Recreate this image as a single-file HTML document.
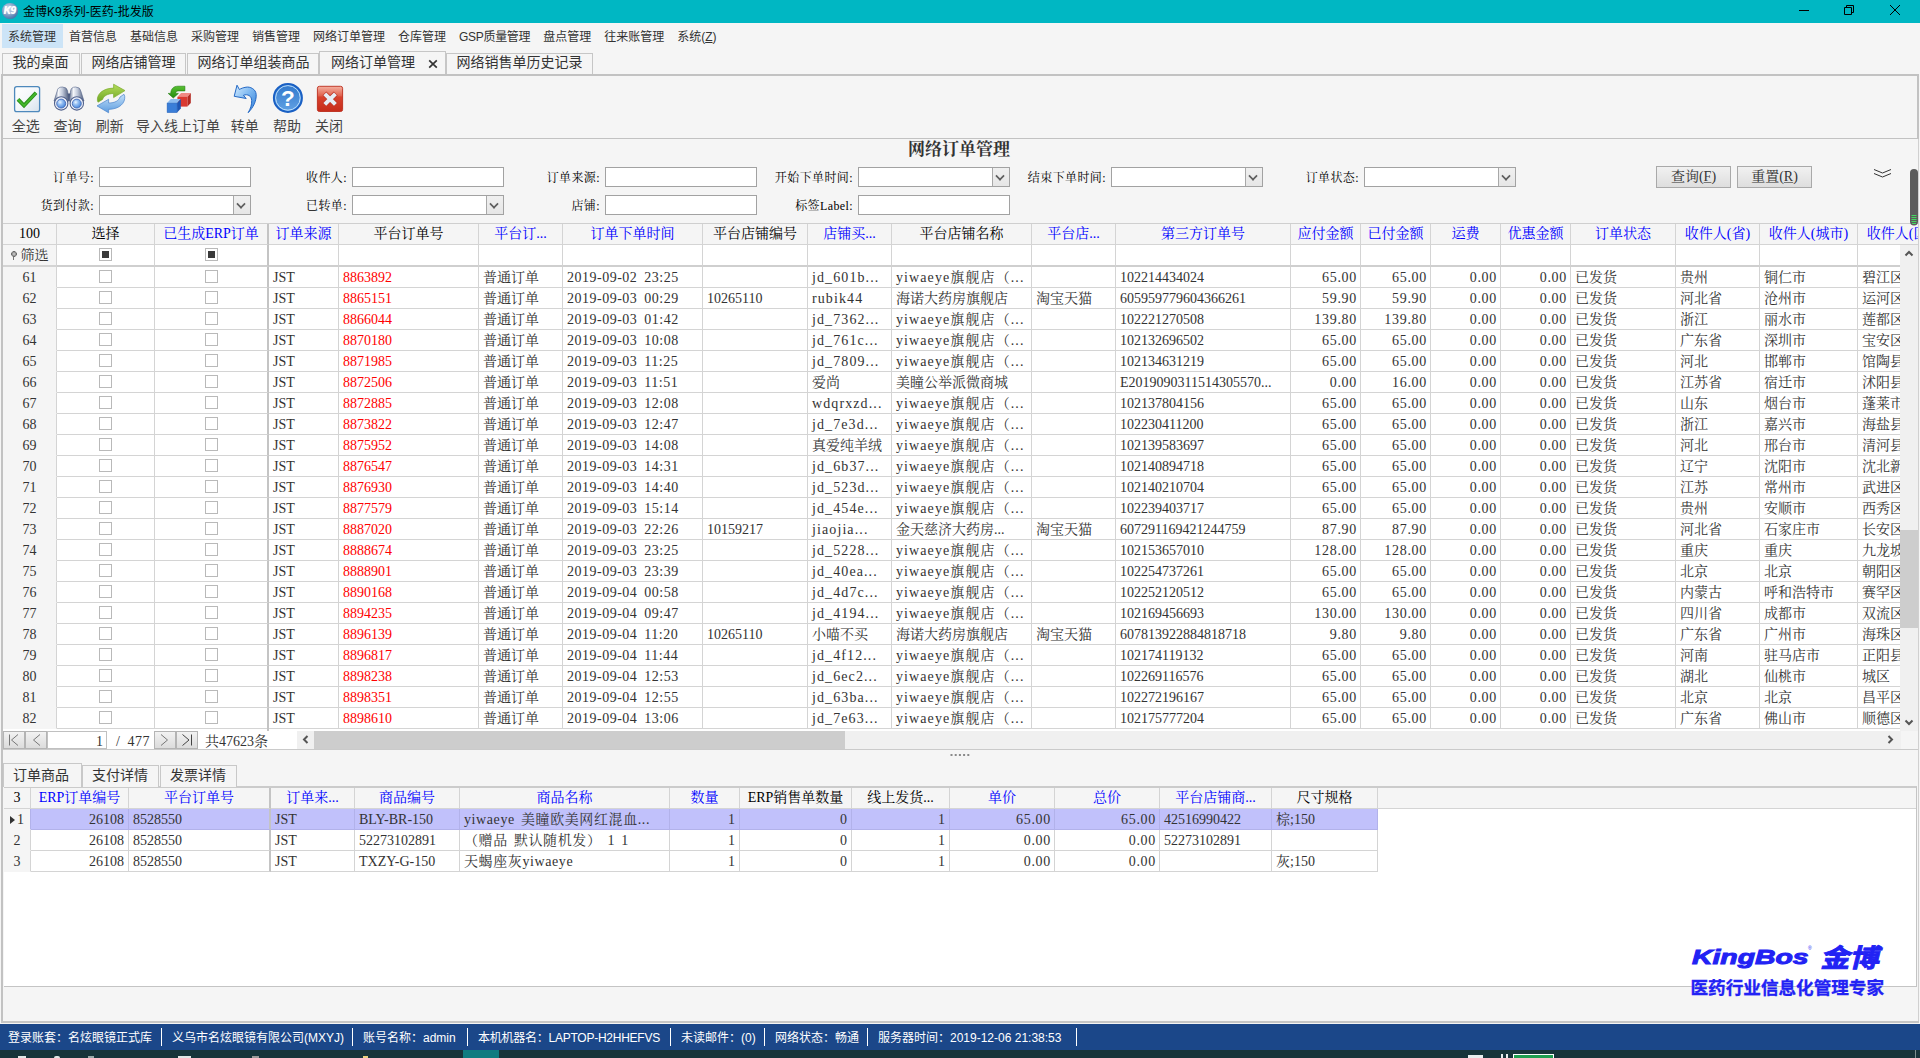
<!DOCTYPE html>
<html lang="zh-CN">
<head>
<meta charset="utf-8">
<title>金博K9系列-医药-批发版</title>
<style>
*{box-sizing:border-box;margin:0;padding:0}
html,body{width:1920px;height:1058px;overflow:hidden;background:#f5f5f5}
body{position:relative;font-family:"Liberation Sans","Noto Sans CJK SC",sans-serif;font-size:12px;color:#222}
.abs{position:absolute}
i{font-style:normal;display:inline-block}
/* title bar */
#tb{left:0;top:0;width:1920px;height:23px;background:#00b7c3}
#tb .t{left:23px;top:1px;line-height:23px;font-size:12px;color:#000}
#ico{left:2px;top:3px;width:15.5px;height:15.5px;border-radius:50%;background:radial-gradient(circle at 40% 35%,#d8e4f0 0,#9bb6d4 30%,#5a82b4 65%,#2f5590 100%);color:#fff;font:italic bold 10px/15px "Liberation Sans",sans-serif;text-align:center;letter-spacing:-.5px;text-shadow:0 0 1px #fff}
/* menu */
#menu{left:2px;top:24px;height:24px;white-space:nowrap;font-size:12px;color:#333}
#menu span{display:inline-block;height:24px;line-height:26px;padding:0 7px 0 6px}
#menu span.on{background:#cce4f7}
/* tabs */
.tab{top:53px;height:22px;border:1px solid #c6c6c6;border-bottom:none;background:#f5f5f5;font-size:14px;line-height:17px;color:#333;padding-left:9.500px;white-space:nowrap}
.tab.act{top:51px;height:23px;background:#f5f5f5;line-height:20px;z-index:3;padding-left:11px}
/* toolbar */
#tool{left:1px;top:74px;width:1918px;height:65px;border:2px solid #c2c2c2;border-bottom-width:1px;background:#f5f5f5}
.tbtn{position:absolute;top:8px;text-align:center;font-size:14px;color:#444;white-space:nowrap}
.tbtn em{display:block;height:30px}
.tbtn b{display:block;font-weight:normal;line-height:18px;margin-top:3px}
/* form */
.sim{font-family:"Liberation Serif","Noto Serif CJK SC",serif}
.lbl{position:absolute;font-size:12px;line-height:22px;letter-spacing:.4px;text-align:right;color:#000;white-space:nowrap}
.inp{position:absolute;width:152px;height:20px;border:1px solid #a2a2a2;background:#fff}
.inp.cmb:after{content:"";position:absolute;right:0;top:0;width:16px;height:18px;background:linear-gradient(#f0f0f0,#e6e6e6);border-left:1px solid #a8a8a8}
.inp.cmb:before{content:"";position:absolute;right:4.600px;top:4px;width:6px;height:6px;border-right:2px solid #5e5e5e;border-bottom:2px solid #5e5e5e;transform:rotate(45deg) scale(.82);z-index:2}
.btn{position:absolute;top:166px;width:75px;height:22px;border:1px solid #a9a9a9;background:linear-gradient(#f1f1f1,#dedede);font-size:14px;line-height:20px;text-align:center;color:#333}
.btn u{text-decoration-color:#777;text-underline-offset:1px}
/* grid */
#g1{position:absolute;left:3px;top:223px;width:1915px;height:508px;background:#fff;border-top:1px solid #cfcfcf;overflow:hidden}
#g2{position:absolute;left:4px;top:786px;width:1913px;height:201px;background:#fff;border-top:2px solid #cbcbcb;border-bottom:1px solid #c4c4c4;border-right:1px solid #c4c4c4;overflow:hidden}
#g2 .gh{width:1913px;background:#f5f5f5;border-bottom:1px solid #d4d4d4}
.gr{position:absolute;left:0;height:21px;white-space:nowrap;font-size:0}
.gr .c{display:inline-block;vertical-align:top;height:21px;line-height:21px;font-size:14px;border-right:1px solid #d4d4d4;border-bottom:1px solid #d4d4d4;padding:0 4px;overflow:hidden;color:#333;background:#fff}
#g1,#g2{font-family:"Liberation Serif","Noto Serif CJK SC",serif}
.gr .c.rn{background:#f5f5f5;text-align:center;padding:0;border-bottom-color:#f5f5f5}
.gr.gh .c.rn,.gr.gf .c.rn{border-bottom-color:#d4d4d4}
.gr .c.fz{border-right:2px solid #c4c4c4}
.gr.gf{height:22px}
.gr.gf .c{height:22px;border-bottom:2px solid #cfcfcf}
.gr .c.dt{letter-spacing:.5px;word-spacing:3px}
.gr .c.ls{letter-spacing:1.1px}
.gr .c.ls2{letter-spacing:.6px;word-spacing:2px}
.gr .c.dec{letter-spacing:.7px;padding-right:3px}
.gr.gh .c{background:#f5f5f5;text-align:center;color:#000;padding:0;line-height:19px;letter-spacing:0}
.gr.gh .c.bl{color:#0000ff}
.gr .c.r{text-align:right}
.gr .c.red{color:#ff0000}
.gr .c.cc{text-align:center}
.cb{width:13px;height:13px;border:1px solid #b9b9b9;background:#fff;vertical-align:top;margin-top:3px;position:relative}
.cb.ind:after{content:"";position:absolute;left:2px;top:2px;width:7px;height:7px;background:#3a3a3a}
.gf .c{text-align:center}
.pin{width:6px;height:10px;margin-right:4px;vertical-align:top;margin-top:6px;background:radial-gradient(circle at 50% 3px,#d8d8d8 0,#8a8a8a 2px,#6a6a6a 2.600px,transparent 3.100px),linear-gradient(#777,#777) 2.500px 5px/1px 4px no-repeat}
.sel .c{background:#c1c1fb;border-right-color:#b2b2ea;border-bottom-color:#b2b2ea}
.sel .c.rn{background:#f5f5f5}
.cur{width:0;height:0;border-left:5px solid #333;border-top:4px solid transparent;border-bottom:4px solid transparent;margin-right:2px}

/* frame lines */
.vl{position:absolute;background:#bdbdbd}
/* scrollbars */
#vs{left:1900px;top:245px;width:18px;height:486px;background:#f0f0f0}
#vs .th{position:absolute;left:0;top:285px;width:18px;height:98px;background:#cdcdcd}
#hs{left:297px;top:731px;width:1604px;height:18px;background:#f0f0f0}
#hs .th{position:absolute;left:17px;top:0;width:531px;height:18px;background:#cdcdcd}
/* pager */
#pg{left:3px;top:729px;width:294px;height:20px;background:#fff;font-size:14px;color:#333}
.pb{position:absolute;top:2px;height:18px;width:22px;border:1px solid #b4b4b4;background:linear-gradient(#f2f2f2,#dcdcdc)}
/* bottom tabs */
.bt{position:absolute;top:765px;height:22px;border:1px solid #c8c8c8;border-bottom:none;font-size:14px;line-height:19px;color:#333;padding-left:9px;background:#f5f5f5;white-space:nowrap}
.bt.act{top:763px;height:24px;line-height:22px;z-index:2}
.lg{z-index:4;color:#2222f4;white-space:nowrap;font-weight:bold;font-family:"Liberation Sans","Noto Sans CJK SC",sans-serif}
/* status */
#sb{left:0;top:1024px;width:1920px;height:26px;background:#1b4789;color:#fff;font-size:12px;line-height:28px;white-space:nowrap}
#sb span{position:absolute;top:0}
#sb i{position:absolute;top:4px;width:1px;height:18px;background:#fff}
</style>
</head>
<body>
<!-- title bar -->
<div id="tb" class="abs">
 <div id="ico" class="abs">K9</div>
 <div class="t abs">金博K9系列-医药-批发版</div>
 <svg class="abs" style="left:1790px;top:0" width="130" height="23" viewBox="0 0 130 23" fill="none" stroke="#000" stroke-width="1">
  <path d="M9 10.5h10"/><path d="M54.5 7.5h7v7h-7z M56.5 7.5v-2h7v7h-2"/><path d="M100 5l10 10M110 5l-10 10"/>
 </svg>
</div>
<!-- menu -->
<div id="menu" class="abs"><span class="on">系统管理</span><span>首营信息</span><span>基础信息</span><span>采购管理</span><span>销售管理</span><span>网络订单管理</span><span>仓库管理</span><span style="letter-spacing:-.33px">GSP质量管理</span><span>盘点管理</span><span>往来账管理</span><span>系统(<u>Z</u>)</span></div>
<!-- tabs -->
<div class="tab abs" style="left:2px;width:78px">我的桌面</div>
<div class="tab abs" style="left:81px;width:105px">网络店铺管理</div>
<div class="tab abs" style="left:187px;width:132px">网络订单组装商品</div>
<div class="tab act abs" style="left:319px;width:127px">网络订单管理<svg style="position:absolute;left:108px;top:7px" width="10" height="10" viewBox="0 0 10 10"><path d="M1.2 1.4L8.8 8.6M8.8 1.4L1.2 8.6" stroke="#333" stroke-width="1.7"/></svg></div>
<div class="tab abs" style="left:446px;width:147px">网络销售单历史记录</div>
<!-- toolbar -->
<div id="tool" class="abs">
 <div class="tbtn" style="left:7.8px;width:30px"><em></em><b>全选</b></div>
 <div class="tbtn" style="left:49.6px;width:30px"><em></em><b>查询</b></div>
 <div class="tbtn" style="left:91.7px;width:30px"><em></em><b>刷新</b></div>
 <div class="tbtn" style="left:132px;width:86px"><em></em><b>导入线上订单</b></div>
 <div class="tbtn" style="left:226.7px;width:30px"><em></em><b>转单</b></div>
 <div class="tbtn" style="left:269px;width:30px"><em></em><b>帮助</b></div>
 <div class="tbtn" style="left:311px;width:30px"><em></em><b>关闭</b></div>
</div>

<svg class="abs" style="left:0;top:80px;z-index:5" width="360" height="36" viewBox="0 80 360 36">
<defs>
<linearGradient id="gcb" x1="0" y1="0" x2="1" y2="1"><stop offset="0" stop-color="#ffffff"/><stop offset=".5" stop-color="#f4f7fa"/><stop offset="1" stop-color="#d6e2ec"/></linearGradient>
<linearGradient id="gbar" x1="0" y1="0" x2="1" y2="0"><stop offset="0" stop-color="#5d6c8c"/><stop offset=".3" stop-color="#f4f6fa"/><stop offset=".55" stop-color="#c4ccdc"/><stop offset="1" stop-color="#4a5878"/></linearGradient>
<radialGradient id="glens" cx=".38" cy=".35" r=".7"><stop offset="0" stop-color="#eaf4ff"/><stop offset=".35" stop-color="#9cc4f4"/><stop offset="1" stop-color="#3f7fd8"/></radialGradient>
<linearGradient id="ggr" x1="0" y1="0" x2="0" y2="1"><stop offset="0" stop-color="#b4dc5a"/><stop offset="1" stop-color="#6ea624"/></linearGradient>
<linearGradient id="gbl" x1="0" y1="0" x2="0" y2="1"><stop offset="0" stop-color="#c4e0f8"/><stop offset="1" stop-color="#5c9ce0"/></linearGradient>
<linearGradient id="gga" x1="0" y1="0" x2="0" y2="1"><stop offset="0" stop-color="#58c030"/><stop offset="1" stop-color="#238a10"/></linearGradient>
<linearGradient id="gun" x1="0" y1="0" x2="1" y2="1"><stop offset="0" stop-color="#d4ecff"/><stop offset=".5" stop-color="#7ab6f0"/><stop offset="1" stop-color="#2f7cd8"/></linearGradient>
<linearGradient id="ghp" x1="0" y1="0" x2="0" y2="1"><stop offset="0" stop-color="#3078cc"/><stop offset="1" stop-color="#62a2e4"/></linearGradient>
<linearGradient id="gcl" x1="0" y1="0" x2="0" y2="1"><stop offset="0" stop-color="#f4b0a0"/><stop offset=".38" stop-color="#e0604c"/><stop offset=".42" stop-color="#d8422e"/><stop offset="1" stop-color="#c62c1a"/></linearGradient>
</defs>
<!-- select all -->
<rect x="14.6" y="86.6" width="25" height="25" rx="2.2" fill="url(#gcb)" stroke="#4e89bc" stroke-width="1.3"/>
<path d="M18 99.4L24 105.6L36 92.8" fill="none" stroke="#2b8f1c" stroke-width="3.8" stroke-linejoin="miter"/>
<path d="M18 99.4L24 105.6L36 92.8" fill="none" stroke="#44b82c" stroke-width="1.8" stroke-linejoin="miter"/>
<!-- binoculars -->
<rect x="66" y="93.5" width="6" height="7" fill="#47567c"/>
<path d="M57.2 91Q57.6 87 62.4 87Q67 87 67.6 91L69 101L54 101Z" fill="url(#gbar)" stroke="#56648a" stroke-width=".6"/>
<path d="M70.6 91Q71 87 75.6 87Q80.2 87 80.8 91L84 101L69 101Z" fill="url(#gbar)" stroke="#56648a" stroke-width=".6"/>
<circle cx="61.2" cy="103.4" r="6.7" fill="#eef2fa" stroke="#51618c" stroke-width="1.1"/>
<circle cx="76.8" cy="103.4" r="6.7" fill="#eef2fa" stroke="#51618c" stroke-width="1.1"/>
<circle cx="61.2" cy="103.6" r="4.5" fill="url(#glens)" stroke="#3d62b0" stroke-width=".8"/>
<circle cx="76.8" cy="103.6" r="4.5" fill="url(#glens)" stroke="#3d62b0" stroke-width=".8"/>
<!-- refresh -->
<path d="M97.4 100.4C96.8 94 103 88.3 113.6 88.1L113.6 84.2L125 90.6L113.6 97.6L113.6 93.5C107.5 93.6 103.6 96 102.6 99.4L98 102.2Z" fill="url(#ggr)" stroke="#7aaa2c" stroke-width=".7"/>
<path d="M124.7 96.2C125.5 103 119.5 109.2 108.6 109.4L108.6 112.8L97 105.9L108.6 99.3L108.6 103C115 103 119 100.6 120 97L124 94.3Z" fill="url(#gbl)" stroke="#4a84cc" stroke-width=".7"/>
<!-- import -->
<path d="M177.4 96.9L181.1 93.1L190.8 93.1L187.4 96.9Z" fill="#f08a84"/>
<path d="M187.4 96.9L190.8 93.1L190.8 103.1L187.4 106.6Z" fill="#b42a22"/>
<rect x="177.4" y="96.9" width="10" height="9.7" fill="#d93a32"/>
<path d="M167.1 103.1L170.8 99.1L180.8 99.1L177.1 103.1Z" fill="#8cbcf0"/>
<path d="M177.1 103.1L180.8 99.1L180.8 108.4L177.1 112.6Z" fill="#1d56b4"/>
<rect x="167.1" y="103.1" width="10" height="9.5" fill="#3a7ed8" stroke="#2460b8" stroke-width=".5"/>
<path d="M184.9 86.2L178 86.2C173 86.2 170.8 89.5 170.8 93.4L168.2 93.4L173.3 98L178.4 93.4L175.8 93.4C175.8 91.6 176.5 90.9 178.5 90.9L184.9 90.9Z" fill="url(#gga)" stroke="#1e7a0c" stroke-width=".6"/>
<!-- undo -->
<path d="M237 85.2L234.2 96.3L246.2 98.5L243.4 95.3C248 93.6 251.5 96 251.7 100.6C251.8 105 250.5 108.6 248.2 112.7C253.6 107 256.4 101 256.2 94.5C255.8 89 250 86.4 246 87.2C243 87.7 241 88.5 239.4 89.5Z" fill="url(#gun)" stroke="#2468c4" stroke-width="1"/>
<!-- help -->
<circle cx="287.9" cy="97.9" r="14" fill="url(#ghp)" stroke="#1a60c4" stroke-width="2"/>
<circle cx="287.9" cy="97.9" r="12.3" fill="none" stroke="#bcdffc" stroke-width="1"/>
<text x="287.9" y="105.8" text-anchor="middle" font-family="Liberation Sans, sans-serif" font-weight="bold" font-size="22.5" fill="#fff">?</text>
<!-- close -->
<rect x="317.4" y="86.3" width="25.2" height="25.2" rx="2" fill="url(#gcl)" stroke="#bb2c1c" stroke-width=".9"/>
<path d="M324.4 93.4L335.8 104.8M335.800 93.4L324.400 104.8" stroke="#c0392a" stroke-width="5.6" stroke-linecap="butt"/>
<path d="M324.8 93.8L335.4 104.4M335.400 93.8L324.800 104.4" stroke="#e6edf5" stroke-width="4" stroke-linecap="butt"/>
</svg>
<!-- form -->
<div class="abs sim" style="left:859px;top:140px;width:200px;height:20px;font-size:17px;font-weight:bold;line-height:20px;color:#333;text-align:center;letter-spacing:0">网络订单管理</div>
<div class="sim">
<div class="lbl" style="left:0;width:94px;top:167px">订单号:</div><div class="inp" style="left:99px;top:167px"></div>
<div class="lbl" style="left:250px;width:97px;top:167px">收件人:</div><div class="inp" style="left:352px;top:167px"></div>
<div class="lbl" style="left:500px;width:100px;top:167px">订单来源:</div><div class="inp" style="left:605px;top:167px"></div>
<div class="lbl" style="left:750px;width:103px;top:167px">开始下单时间:</div><div class="inp cmb" style="left:858px;top:167px"></div>
<div class="lbl" style="left:1000px;width:106px;top:167px">结束下单时间:</div><div class="inp cmb" style="left:1111px;top:167px"></div>
<div class="lbl" style="left:1250px;width:109px;top:167px">订单状态:</div><div class="inp cmb" style="left:1364px;top:167px"></div>
<div class="lbl" style="left:0;width:94px;top:195px">货到付款:</div><div class="inp cmb" style="left:99px;top:195px"></div>
<div class="lbl" style="left:250px;width:97px;top:195px">已转单:</div><div class="inp cmb" style="left:352px;top:195px"></div>
<div class="lbl" style="left:500px;width:100px;top:195px">店铺:</div><div class="inp" style="left:605px;top:195px"></div>
<div class="lbl" style="left:750px;width:103px;top:195px">标签Label:</div><div class="inp" style="left:858px;top:195px"></div>
<div class="btn" style="left:1656px">查询(<u>F</u>)</div>
<div class="btn" style="left:1737px">重置(<u>R</u>)</div>
</div>
<div id="g1">
<div class="gr gh" style="top:0">
<div class="c rn" style="width:54px">100</div>
<div class="c hc" style="width:98px">选择</div>
<div class="c hc bl fz" style="width:114px">已生成ERP订单</div>
<div class="c hc bl" style="width:70px">订单来源</div>
<div class="c hc" style="width:140px">平台订单号</div>
<div class="c hc bl" style="width:84px">平台订...</div>
<div class="c hc bl" style="width:140px">订单下单时间</div>
<div class="c hc" style="width:105px">平台店铺编号</div>
<div class="c hc bl" style="width:84px">店铺买...</div>
<div class="c hc" style="width:140px">平台店铺名称</div>
<div class="c hc bl" style="width:84px">平台店...</div>
<div class="c hc bl" style="width:175px">第三方订单号</div>
<div class="c hc bl" style="width:70px">应付金额</div>
<div class="c hc bl" style="width:70px">已付金额</div>
<div class="c hc bl" style="width:70px">运费</div>
<div class="c hc bl" style="width:70px">优惠金额</div>
<div class="c hc bl" style="width:105px">订单状态</div>
<div class="c hc bl" style="width:84px">收件人(省)</div>
<div class="c hc bl" style="width:98px">收件人(城市)</div>
<div class="c hc bl" style="width:98px">收件人(区县)</div>
</div>
<div class="gr gf" style="top:21px">
<div class="c rn fl" style="width:54px"><i class="pin"></i>筛选</div>
<div class="c" style="width:98px"><i class="cb ind"></i></div>
<div class="c fz" style="width:114px"><i class="cb ind"></i></div>
<div class="c" style="width:70px"></div>
<div class="c" style="width:140px"></div>
<div class="c" style="width:84px"></div>
<div class="c" style="width:140px"></div>
<div class="c" style="width:105px"></div>
<div class="c" style="width:84px"></div>
<div class="c" style="width:140px"></div>
<div class="c" style="width:84px"></div>
<div class="c" style="width:175px"></div>
<div class="c" style="width:70px"></div>
<div class="c" style="width:70px"></div>
<div class="c" style="width:70px"></div>
<div class="c" style="width:70px"></div>
<div class="c" style="width:105px"></div>
<div class="c" style="width:84px"></div>
<div class="c" style="width:98px"></div>
<div class="c" style="width:98px"></div>
</div>
<div class="gr" style="top:43px">
<div class="c rn" style="width:54px">61</div>
<div class="c cc" style="width:98px"><i class="cb"></i></div>
<div class="c cc fz" style="width:114px"><i class="cb"></i></div>
<div class="c" style="width:70px">JST</div>
<div class="c red" style="width:140px">8863892</div>
<div class="c" style="width:84px">普通订单</div>
<div class="c dt" style="width:140px">2019-09-02 23:25</div>
<div class="c" style="width:105px"></div>
<div class="c ls" style="width:84px">jd_601b...</div>
<div class="c ls" style="width:140px">yiwaeye旗舰店（...</div>
<div class="c" style="width:84px"></div>
<div class="c" style="width:175px">102214434024</div>
<div class="c r dec" style="width:70px">65.00</div>
<div class="c r dec" style="width:70px">65.00</div>
<div class="c r dec" style="width:70px">0.00</div>
<div class="c r dec" style="width:70px">0.00</div>
<div class="c" style="width:105px">已发货</div>
<div class="c" style="width:84px">贵州</div>
<div class="c" style="width:98px">铜仁市</div>
<div class="c" style="width:98px">碧江区</div>
</div>
<div class="gr" style="top:64px">
<div class="c rn" style="width:54px">62</div>
<div class="c cc" style="width:98px"><i class="cb"></i></div>
<div class="c cc fz" style="width:114px"><i class="cb"></i></div>
<div class="c" style="width:70px">JST</div>
<div class="c red" style="width:140px">8865151</div>
<div class="c" style="width:84px">普通订单</div>
<div class="c dt" style="width:140px">2019-09-03 00:29</div>
<div class="c" style="width:105px">10265110</div>
<div class="c ls" style="width:84px">rubik44</div>
<div class="c" style="width:140px">海诺大药房旗舰店</div>
<div class="c" style="width:84px">淘宝天猫</div>
<div class="c" style="width:175px">605959779604366261</div>
<div class="c r dec" style="width:70px">59.90</div>
<div class="c r dec" style="width:70px">59.90</div>
<div class="c r dec" style="width:70px">0.00</div>
<div class="c r dec" style="width:70px">0.00</div>
<div class="c" style="width:105px">已发货</div>
<div class="c" style="width:84px">河北省</div>
<div class="c" style="width:98px">沧州市</div>
<div class="c" style="width:98px">运河区</div>
</div>
<div class="gr" style="top:85px">
<div class="c rn" style="width:54px">63</div>
<div class="c cc" style="width:98px"><i class="cb"></i></div>
<div class="c cc fz" style="width:114px"><i class="cb"></i></div>
<div class="c" style="width:70px">JST</div>
<div class="c red" style="width:140px">8866044</div>
<div class="c" style="width:84px">普通订单</div>
<div class="c dt" style="width:140px">2019-09-03 01:42</div>
<div class="c" style="width:105px"></div>
<div class="c ls" style="width:84px">jd_7362...</div>
<div class="c ls" style="width:140px">yiwaeye旗舰店（...</div>
<div class="c" style="width:84px"></div>
<div class="c" style="width:175px">102221270508</div>
<div class="c r dec" style="width:70px">139.80</div>
<div class="c r dec" style="width:70px">139.80</div>
<div class="c r dec" style="width:70px">0.00</div>
<div class="c r dec" style="width:70px">0.00</div>
<div class="c" style="width:105px">已发货</div>
<div class="c" style="width:84px">浙江</div>
<div class="c" style="width:98px">丽水市</div>
<div class="c" style="width:98px">莲都区</div>
</div>
<div class="gr" style="top:106px">
<div class="c rn" style="width:54px">64</div>
<div class="c cc" style="width:98px"><i class="cb"></i></div>
<div class="c cc fz" style="width:114px"><i class="cb"></i></div>
<div class="c" style="width:70px">JST</div>
<div class="c red" style="width:140px">8870180</div>
<div class="c" style="width:84px">普通订单</div>
<div class="c dt" style="width:140px">2019-09-03 10:08</div>
<div class="c" style="width:105px"></div>
<div class="c ls" style="width:84px">jd_761c...</div>
<div class="c ls" style="width:140px">yiwaeye旗舰店（...</div>
<div class="c" style="width:84px"></div>
<div class="c" style="width:175px">102132696502</div>
<div class="c r dec" style="width:70px">65.00</div>
<div class="c r dec" style="width:70px">65.00</div>
<div class="c r dec" style="width:70px">0.00</div>
<div class="c r dec" style="width:70px">0.00</div>
<div class="c" style="width:105px">已发货</div>
<div class="c" style="width:84px">广东省</div>
<div class="c" style="width:98px">深圳市</div>
<div class="c" style="width:98px">宝安区</div>
</div>
<div class="gr" style="top:127px">
<div class="c rn" style="width:54px">65</div>
<div class="c cc" style="width:98px"><i class="cb"></i></div>
<div class="c cc fz" style="width:114px"><i class="cb"></i></div>
<div class="c" style="width:70px">JST</div>
<div class="c red" style="width:140px">8871985</div>
<div class="c" style="width:84px">普通订单</div>
<div class="c dt" style="width:140px">2019-09-03 11:25</div>
<div class="c" style="width:105px"></div>
<div class="c ls" style="width:84px">jd_7809...</div>
<div class="c ls" style="width:140px">yiwaeye旗舰店（...</div>
<div class="c" style="width:84px"></div>
<div class="c" style="width:175px">102134631219</div>
<div class="c r dec" style="width:70px">65.00</div>
<div class="c r dec" style="width:70px">65.00</div>
<div class="c r dec" style="width:70px">0.00</div>
<div class="c r dec" style="width:70px">0.00</div>
<div class="c" style="width:105px">已发货</div>
<div class="c" style="width:84px">河北</div>
<div class="c" style="width:98px">邯郸市</div>
<div class="c" style="width:98px">馆陶县</div>
</div>
<div class="gr" style="top:148px">
<div class="c rn" style="width:54px">66</div>
<div class="c cc" style="width:98px"><i class="cb"></i></div>
<div class="c cc fz" style="width:114px"><i class="cb"></i></div>
<div class="c" style="width:70px">JST</div>
<div class="c red" style="width:140px">8872506</div>
<div class="c" style="width:84px">普通订单</div>
<div class="c dt" style="width:140px">2019-09-03 11:51</div>
<div class="c" style="width:105px"></div>
<div class="c" style="width:84px">爱尚</div>
<div class="c" style="width:140px">美瞳公举派微商城</div>
<div class="c" style="width:84px"></div>
<div class="c" style="width:175px">E2019090311514305570...</div>
<div class="c r dec" style="width:70px">0.00</div>
<div class="c r dec" style="width:70px">16.00</div>
<div class="c r dec" style="width:70px">0.00</div>
<div class="c r dec" style="width:70px">0.00</div>
<div class="c" style="width:105px">已发货</div>
<div class="c" style="width:84px">江苏省</div>
<div class="c" style="width:98px">宿迁市</div>
<div class="c" style="width:98px">沭阳县</div>
</div>
<div class="gr" style="top:169px">
<div class="c rn" style="width:54px">67</div>
<div class="c cc" style="width:98px"><i class="cb"></i></div>
<div class="c cc fz" style="width:114px"><i class="cb"></i></div>
<div class="c" style="width:70px">JST</div>
<div class="c red" style="width:140px">8872885</div>
<div class="c" style="width:84px">普通订单</div>
<div class="c dt" style="width:140px">2019-09-03 12:08</div>
<div class="c" style="width:105px"></div>
<div class="c ls" style="width:84px">wdqrxzd...</div>
<div class="c ls" style="width:140px">yiwaeye旗舰店（...</div>
<div class="c" style="width:84px"></div>
<div class="c" style="width:175px">102137804156</div>
<div class="c r dec" style="width:70px">65.00</div>
<div class="c r dec" style="width:70px">65.00</div>
<div class="c r dec" style="width:70px">0.00</div>
<div class="c r dec" style="width:70px">0.00</div>
<div class="c" style="width:105px">已发货</div>
<div class="c" style="width:84px">山东</div>
<div class="c" style="width:98px">烟台市</div>
<div class="c" style="width:98px">蓬莱市</div>
</div>
<div class="gr" style="top:190px">
<div class="c rn" style="width:54px">68</div>
<div class="c cc" style="width:98px"><i class="cb"></i></div>
<div class="c cc fz" style="width:114px"><i class="cb"></i></div>
<div class="c" style="width:70px">JST</div>
<div class="c red" style="width:140px">8873822</div>
<div class="c" style="width:84px">普通订单</div>
<div class="c dt" style="width:140px">2019-09-03 12:47</div>
<div class="c" style="width:105px"></div>
<div class="c ls" style="width:84px">jd_7e3d...</div>
<div class="c ls" style="width:140px">yiwaeye旗舰店（...</div>
<div class="c" style="width:84px"></div>
<div class="c" style="width:175px">102230411200</div>
<div class="c r dec" style="width:70px">65.00</div>
<div class="c r dec" style="width:70px">65.00</div>
<div class="c r dec" style="width:70px">0.00</div>
<div class="c r dec" style="width:70px">0.00</div>
<div class="c" style="width:105px">已发货</div>
<div class="c" style="width:84px">浙江</div>
<div class="c" style="width:98px">嘉兴市</div>
<div class="c" style="width:98px">海盐县</div>
</div>
<div class="gr" style="top:211px">
<div class="c rn" style="width:54px">69</div>
<div class="c cc" style="width:98px"><i class="cb"></i></div>
<div class="c cc fz" style="width:114px"><i class="cb"></i></div>
<div class="c" style="width:70px">JST</div>
<div class="c red" style="width:140px">8875952</div>
<div class="c" style="width:84px">普通订单</div>
<div class="c dt" style="width:140px">2019-09-03 14:08</div>
<div class="c" style="width:105px"></div>
<div class="c" style="width:84px">真爱纯羊绒</div>
<div class="c ls" style="width:140px">yiwaeye旗舰店（...</div>
<div class="c" style="width:84px"></div>
<div class="c" style="width:175px">102139583697</div>
<div class="c r dec" style="width:70px">65.00</div>
<div class="c r dec" style="width:70px">65.00</div>
<div class="c r dec" style="width:70px">0.00</div>
<div class="c r dec" style="width:70px">0.00</div>
<div class="c" style="width:105px">已发货</div>
<div class="c" style="width:84px">河北</div>
<div class="c" style="width:98px">邢台市</div>
<div class="c" style="width:98px">清河县</div>
</div>
<div class="gr" style="top:232px">
<div class="c rn" style="width:54px">70</div>
<div class="c cc" style="width:98px"><i class="cb"></i></div>
<div class="c cc fz" style="width:114px"><i class="cb"></i></div>
<div class="c" style="width:70px">JST</div>
<div class="c red" style="width:140px">8876547</div>
<div class="c" style="width:84px">普通订单</div>
<div class="c dt" style="width:140px">2019-09-03 14:31</div>
<div class="c" style="width:105px"></div>
<div class="c ls" style="width:84px">jd_6b37...</div>
<div class="c ls" style="width:140px">yiwaeye旗舰店（...</div>
<div class="c" style="width:84px"></div>
<div class="c" style="width:175px">102140894718</div>
<div class="c r dec" style="width:70px">65.00</div>
<div class="c r dec" style="width:70px">65.00</div>
<div class="c r dec" style="width:70px">0.00</div>
<div class="c r dec" style="width:70px">0.00</div>
<div class="c" style="width:105px">已发货</div>
<div class="c" style="width:84px">辽宁</div>
<div class="c" style="width:98px">沈阳市</div>
<div class="c" style="width:98px">沈北新区</div>
</div>
<div class="gr" style="top:253px">
<div class="c rn" style="width:54px">71</div>
<div class="c cc" style="width:98px"><i class="cb"></i></div>
<div class="c cc fz" style="width:114px"><i class="cb"></i></div>
<div class="c" style="width:70px">JST</div>
<div class="c red" style="width:140px">8876930</div>
<div class="c" style="width:84px">普通订单</div>
<div class="c dt" style="width:140px">2019-09-03 14:40</div>
<div class="c" style="width:105px"></div>
<div class="c ls" style="width:84px">jd_523d...</div>
<div class="c ls" style="width:140px">yiwaeye旗舰店（...</div>
<div class="c" style="width:84px"></div>
<div class="c" style="width:175px">102140210704</div>
<div class="c r dec" style="width:70px">65.00</div>
<div class="c r dec" style="width:70px">65.00</div>
<div class="c r dec" style="width:70px">0.00</div>
<div class="c r dec" style="width:70px">0.00</div>
<div class="c" style="width:105px">已发货</div>
<div class="c" style="width:84px">江苏</div>
<div class="c" style="width:98px">常州市</div>
<div class="c" style="width:98px">武进区</div>
</div>
<div class="gr" style="top:274px">
<div class="c rn" style="width:54px">72</div>
<div class="c cc" style="width:98px"><i class="cb"></i></div>
<div class="c cc fz" style="width:114px"><i class="cb"></i></div>
<div class="c" style="width:70px">JST</div>
<div class="c red" style="width:140px">8877579</div>
<div class="c" style="width:84px">普通订单</div>
<div class="c dt" style="width:140px">2019-09-03 15:14</div>
<div class="c" style="width:105px"></div>
<div class="c ls" style="width:84px">jd_454e...</div>
<div class="c ls" style="width:140px">yiwaeye旗舰店（...</div>
<div class="c" style="width:84px"></div>
<div class="c" style="width:175px">102239403717</div>
<div class="c r dec" style="width:70px">65.00</div>
<div class="c r dec" style="width:70px">65.00</div>
<div class="c r dec" style="width:70px">0.00</div>
<div class="c r dec" style="width:70px">0.00</div>
<div class="c" style="width:105px">已发货</div>
<div class="c" style="width:84px">贵州</div>
<div class="c" style="width:98px">安顺市</div>
<div class="c" style="width:98px">西秀区</div>
</div>
<div class="gr" style="top:295px">
<div class="c rn" style="width:54px">73</div>
<div class="c cc" style="width:98px"><i class="cb"></i></div>
<div class="c cc fz" style="width:114px"><i class="cb"></i></div>
<div class="c" style="width:70px">JST</div>
<div class="c red" style="width:140px">8887020</div>
<div class="c" style="width:84px">普通订单</div>
<div class="c dt" style="width:140px">2019-09-03 22:26</div>
<div class="c" style="width:105px">10159217</div>
<div class="c ls" style="width:84px">jiaojia...</div>
<div class="c" style="width:140px">金天慈济大药房...</div>
<div class="c" style="width:84px">淘宝天猫</div>
<div class="c" style="width:175px">607291169421244759</div>
<div class="c r dec" style="width:70px">87.90</div>
<div class="c r dec" style="width:70px">87.90</div>
<div class="c r dec" style="width:70px">0.00</div>
<div class="c r dec" style="width:70px">0.00</div>
<div class="c" style="width:105px">已发货</div>
<div class="c" style="width:84px">河北省</div>
<div class="c" style="width:98px">石家庄市</div>
<div class="c" style="width:98px">长安区</div>
</div>
<div class="gr" style="top:316px">
<div class="c rn" style="width:54px">74</div>
<div class="c cc" style="width:98px"><i class="cb"></i></div>
<div class="c cc fz" style="width:114px"><i class="cb"></i></div>
<div class="c" style="width:70px">JST</div>
<div class="c red" style="width:140px">8888674</div>
<div class="c" style="width:84px">普通订单</div>
<div class="c dt" style="width:140px">2019-09-03 23:25</div>
<div class="c" style="width:105px"></div>
<div class="c ls" style="width:84px">jd_5228...</div>
<div class="c ls" style="width:140px">yiwaeye旗舰店（...</div>
<div class="c" style="width:84px"></div>
<div class="c" style="width:175px">102153657010</div>
<div class="c r dec" style="width:70px">128.00</div>
<div class="c r dec" style="width:70px">128.00</div>
<div class="c r dec" style="width:70px">0.00</div>
<div class="c r dec" style="width:70px">0.00</div>
<div class="c" style="width:105px">已发货</div>
<div class="c" style="width:84px">重庆</div>
<div class="c" style="width:98px">重庆</div>
<div class="c" style="width:98px">九龙坡区</div>
</div>
<div class="gr" style="top:337px">
<div class="c rn" style="width:54px">75</div>
<div class="c cc" style="width:98px"><i class="cb"></i></div>
<div class="c cc fz" style="width:114px"><i class="cb"></i></div>
<div class="c" style="width:70px">JST</div>
<div class="c red" style="width:140px">8888901</div>
<div class="c" style="width:84px">普通订单</div>
<div class="c dt" style="width:140px">2019-09-03 23:39</div>
<div class="c" style="width:105px"></div>
<div class="c ls" style="width:84px">jd_40ea...</div>
<div class="c ls" style="width:140px">yiwaeye旗舰店（...</div>
<div class="c" style="width:84px"></div>
<div class="c" style="width:175px">102254737261</div>
<div class="c r dec" style="width:70px">65.00</div>
<div class="c r dec" style="width:70px">65.00</div>
<div class="c r dec" style="width:70px">0.00</div>
<div class="c r dec" style="width:70px">0.00</div>
<div class="c" style="width:105px">已发货</div>
<div class="c" style="width:84px">北京</div>
<div class="c" style="width:98px">北京</div>
<div class="c" style="width:98px">朝阳区</div>
</div>
<div class="gr" style="top:358px">
<div class="c rn" style="width:54px">76</div>
<div class="c cc" style="width:98px"><i class="cb"></i></div>
<div class="c cc fz" style="width:114px"><i class="cb"></i></div>
<div class="c" style="width:70px">JST</div>
<div class="c red" style="width:140px">8890168</div>
<div class="c" style="width:84px">普通订单</div>
<div class="c dt" style="width:140px">2019-09-04 00:58</div>
<div class="c" style="width:105px"></div>
<div class="c ls" style="width:84px">jd_4d7c...</div>
<div class="c ls" style="width:140px">yiwaeye旗舰店（...</div>
<div class="c" style="width:84px"></div>
<div class="c" style="width:175px">102252120512</div>
<div class="c r dec" style="width:70px">65.00</div>
<div class="c r dec" style="width:70px">65.00</div>
<div class="c r dec" style="width:70px">0.00</div>
<div class="c r dec" style="width:70px">0.00</div>
<div class="c" style="width:105px">已发货</div>
<div class="c" style="width:84px">内蒙古</div>
<div class="c" style="width:98px">呼和浩特市</div>
<div class="c" style="width:98px">赛罕区</div>
</div>
<div class="gr" style="top:379px">
<div class="c rn" style="width:54px">77</div>
<div class="c cc" style="width:98px"><i class="cb"></i></div>
<div class="c cc fz" style="width:114px"><i class="cb"></i></div>
<div class="c" style="width:70px">JST</div>
<div class="c red" style="width:140px">8894235</div>
<div class="c" style="width:84px">普通订单</div>
<div class="c dt" style="width:140px">2019-09-04 09:47</div>
<div class="c" style="width:105px"></div>
<div class="c ls" style="width:84px">jd_4194...</div>
<div class="c ls" style="width:140px">yiwaeye旗舰店（...</div>
<div class="c" style="width:84px"></div>
<div class="c" style="width:175px">102169456693</div>
<div class="c r dec" style="width:70px">130.00</div>
<div class="c r dec" style="width:70px">130.00</div>
<div class="c r dec" style="width:70px">0.00</div>
<div class="c r dec" style="width:70px">0.00</div>
<div class="c" style="width:105px">已发货</div>
<div class="c" style="width:84px">四川省</div>
<div class="c" style="width:98px">成都市</div>
<div class="c" style="width:98px">双流区</div>
</div>
<div class="gr" style="top:400px">
<div class="c rn" style="width:54px">78</div>
<div class="c cc" style="width:98px"><i class="cb"></i></div>
<div class="c cc fz" style="width:114px"><i class="cb"></i></div>
<div class="c" style="width:70px">JST</div>
<div class="c red" style="width:140px">8896139</div>
<div class="c" style="width:84px">普通订单</div>
<div class="c dt" style="width:140px">2019-09-04 11:20</div>
<div class="c" style="width:105px">10265110</div>
<div class="c" style="width:84px">小喵不买</div>
<div class="c" style="width:140px">海诺大药房旗舰店</div>
<div class="c" style="width:84px">淘宝天猫</div>
<div class="c" style="width:175px">607813922884818718</div>
<div class="c r dec" style="width:70px">9.80</div>
<div class="c r dec" style="width:70px">9.80</div>
<div class="c r dec" style="width:70px">0.00</div>
<div class="c r dec" style="width:70px">0.00</div>
<div class="c" style="width:105px">已发货</div>
<div class="c" style="width:84px">广东省</div>
<div class="c" style="width:98px">广州市</div>
<div class="c" style="width:98px">海珠区</div>
</div>
<div class="gr" style="top:421px">
<div class="c rn" style="width:54px">79</div>
<div class="c cc" style="width:98px"><i class="cb"></i></div>
<div class="c cc fz" style="width:114px"><i class="cb"></i></div>
<div class="c" style="width:70px">JST</div>
<div class="c red" style="width:140px">8896817</div>
<div class="c" style="width:84px">普通订单</div>
<div class="c dt" style="width:140px">2019-09-04 11:44</div>
<div class="c" style="width:105px"></div>
<div class="c ls" style="width:84px">jd_4f12...</div>
<div class="c ls" style="width:140px">yiwaeye旗舰店（...</div>
<div class="c" style="width:84px"></div>
<div class="c" style="width:175px">102174119132</div>
<div class="c r dec" style="width:70px">65.00</div>
<div class="c r dec" style="width:70px">65.00</div>
<div class="c r dec" style="width:70px">0.00</div>
<div class="c r dec" style="width:70px">0.00</div>
<div class="c" style="width:105px">已发货</div>
<div class="c" style="width:84px">河南</div>
<div class="c" style="width:98px">驻马店市</div>
<div class="c" style="width:98px">正阳县</div>
</div>
<div class="gr" style="top:442px">
<div class="c rn" style="width:54px">80</div>
<div class="c cc" style="width:98px"><i class="cb"></i></div>
<div class="c cc fz" style="width:114px"><i class="cb"></i></div>
<div class="c" style="width:70px">JST</div>
<div class="c red" style="width:140px">8898238</div>
<div class="c" style="width:84px">普通订单</div>
<div class="c dt" style="width:140px">2019-09-04 12:53</div>
<div class="c" style="width:105px"></div>
<div class="c ls" style="width:84px">jd_6ec2...</div>
<div class="c ls" style="width:140px">yiwaeye旗舰店（...</div>
<div class="c" style="width:84px"></div>
<div class="c" style="width:175px">102269116576</div>
<div class="c r dec" style="width:70px">65.00</div>
<div class="c r dec" style="width:70px">65.00</div>
<div class="c r dec" style="width:70px">0.00</div>
<div class="c r dec" style="width:70px">0.00</div>
<div class="c" style="width:105px">已发货</div>
<div class="c" style="width:84px">湖北</div>
<div class="c" style="width:98px">仙桃市</div>
<div class="c" style="width:98px">城区</div>
</div>
<div class="gr" style="top:463px">
<div class="c rn" style="width:54px">81</div>
<div class="c cc" style="width:98px"><i class="cb"></i></div>
<div class="c cc fz" style="width:114px"><i class="cb"></i></div>
<div class="c" style="width:70px">JST</div>
<div class="c red" style="width:140px">8898351</div>
<div class="c" style="width:84px">普通订单</div>
<div class="c dt" style="width:140px">2019-09-04 12:55</div>
<div class="c" style="width:105px"></div>
<div class="c ls" style="width:84px">jd_63ba...</div>
<div class="c ls" style="width:140px">yiwaeye旗舰店（...</div>
<div class="c" style="width:84px"></div>
<div class="c" style="width:175px">102272196167</div>
<div class="c r dec" style="width:70px">65.00</div>
<div class="c r dec" style="width:70px">65.00</div>
<div class="c r dec" style="width:70px">0.00</div>
<div class="c r dec" style="width:70px">0.00</div>
<div class="c" style="width:105px">已发货</div>
<div class="c" style="width:84px">北京</div>
<div class="c" style="width:98px">北京</div>
<div class="c" style="width:98px">昌平区</div>
</div>
<div class="gr" style="top:484px">
<div class="c rn" style="width:54px">82</div>
<div class="c cc" style="width:98px"><i class="cb"></i></div>
<div class="c cc fz" style="width:114px"><i class="cb"></i></div>
<div class="c" style="width:70px">JST</div>
<div class="c red" style="width:140px">8898610</div>
<div class="c" style="width:84px">普通订单</div>
<div class="c dt" style="width:140px">2019-09-04 13:06</div>
<div class="c" style="width:105px"></div>
<div class="c ls" style="width:84px">jd_7e63...</div>
<div class="c ls" style="width:140px">yiwaeye旗舰店（...</div>
<div class="c" style="width:84px"></div>
<div class="c" style="width:175px">102175777204</div>
<div class="c r dec" style="width:70px">65.00</div>
<div class="c r dec" style="width:70px">65.00</div>
<div class="c r dec" style="width:70px">0.00</div>
<div class="c r dec" style="width:70px">0.00</div>
<div class="c" style="width:105px">已发货</div>
<div class="c" style="width:84px">广东省</div>
<div class="c" style="width:98px">佛山市</div>
<div class="c" style="width:98px">顺德区</div>
</div>
</div>
<div id="g2">
<div class="gr gh" style="top:0">
<div class="c rn" style="width:27px">3</div>
<div class="c hc bl" style="width:98px">ERP订单编号</div>
<div class="c hc bl fz" style="width:142px">平台订单号</div>
<div class="c hc bl" style="width:84px">订单来...</div>
<div class="c hc bl" style="width:105px">商品编号</div>
<div class="c hc bl" style="width:210px">商品名称</div>
<div class="c hc bl" style="width:70px">数量</div>
<div class="c hc" style="width:112px">ERP销售单数量</div>
<div class="c hc" style="width:98px">线上发货...</div>
<div class="c hc bl" style="width:105px">单价</div>
<div class="c hc bl" style="width:105px">总价</div>
<div class="c hc bl" style="width:112px">平台店铺商...</div>
<div class="c hc" style="width:106px">尺寸规格</div>
</div>
<div class="gr sel" style="top:21px">
<div class="c rn" style="width:27px"><i class="cur"></i>1</div>
<div class="c r" style="width:98px">26108</div>
<div class="c fz" style="width:142px">8528550</div>
<div class="c" style="width:84px">JST</div>
<div class="c" style="width:105px">BLY-BR-150</div>
<div class="c ls2" style="width:210px">yiwaeye 美瞳欧美网红混血...</div>
<div class="c r" style="width:70px">1</div>
<div class="c r" style="width:112px">0</div>
<div class="c r" style="width:98px">1</div>
<div class="c r dec" style="width:105px">65.00</div>
<div class="c r dec" style="width:105px">65.00</div>
<div class="c" style="width:112px">42516990422</div>
<div class="c" style="width:106px">棕;150</div>
</div>
<div class="gr" style="top:42px">
<div class="c rn" style="width:27px">2</div>
<div class="c r" style="width:98px">26108</div>
<div class="c fz" style="width:142px">8528550</div>
<div class="c" style="width:84px">JST</div>
<div class="c" style="width:105px">52273102891</div>
<div class="c ls2" style="width:210px">（赠品 默认随机发） 1 1</div>
<div class="c r" style="width:70px">1</div>
<div class="c r" style="width:112px">0</div>
<div class="c r" style="width:98px">1</div>
<div class="c r dec" style="width:105px">0.00</div>
<div class="c r dec" style="width:105px">0.00</div>
<div class="c" style="width:112px">52273102891</div>
<div class="c" style="width:106px"></div>
</div>
<div class="gr" style="top:63px">
<div class="c rn" style="width:27px">3</div>
<div class="c r" style="width:98px">26108</div>
<div class="c fz" style="width:142px">8528550</div>
<div class="c" style="width:84px">JST</div>
<div class="c" style="width:105px">TXZY-G-150</div>
<div class="c ls2" style="width:210px">天蝎座灰yiwaeye</div>
<div class="c r" style="width:70px">1</div>
<div class="c r" style="width:112px">0</div>
<div class="c r" style="width:98px">1</div>
<div class="c r dec" style="width:105px">0.00</div>
<div class="c r dec" style="width:105px">0.00</div>
<div class="c" style="width:112px"></div>
<div class="c" style="width:106px">灰;150</div>
</div>
</div>
<!-- frame -->
<div class="vl" style="left:1px;top:139px;width:2px;height:884px;background:#c2c2c2"></div>
<div class="vl" style="left:1918px;top:139px;width:1px;height:884px;background:#d0d0d0"></div>
<div class="vl" style="left:1px;top:1021px;width:1918px;height:2px;background:#c6c6c6"></div>
<!-- collapse chevrons + dark pill -->
<svg class="abs" style="left:1870px;top:165px;z-index:6" width="50" height="64" viewBox="1870 165 50 64">
 <path d="M1874 169.5L1882.5 173L1891 169.5M1874 173.5L1882.5 177L1891 173.5" fill="none" stroke="#333" stroke-width="1"/>
 <rect x="1910" y="169" width="8" height="56.5" rx="4" fill="#5c5c5c"/>
 <path d="M1911.5 215.5h5M1911.5 217.5h5M1911.5 219.5h5M1911.5 221.5h5M1912 223.5h4" stroke="#45d860" stroke-width="1"/>
</svg>
<!-- scrollbars -->
<div id="vs" class="abs"><div class="th"></div>
 <svg class="abs" style="left:0;top:0" width="18" height="486"><path d="M5.5 10.5L9 7L12.5 10.5" fill="none" stroke="#555" stroke-width="2"/><path d="M5.5 475.5L9 479L12.5 475.5" fill="none" stroke="#555" stroke-width="2"/></svg>
</div>
<div id="hs" class="abs"><div class="th"></div>
 <svg class="abs" style="left:0;top:0" width="1604" height="18"><path d="M10.5 5L7 8.5L10.5 12" fill="none" stroke="#555" stroke-width="2"/><path d="M1591.5 5L1595 8.5L1591.5 12" fill="none" stroke="#555" stroke-width="2"/></svg>
</div>
<div class="abs" style="left:3px;top:749px;width:1915px;height:1px;background:#cacaca"></div>
<div class="abs" style="left:267px;top:728px;width:2px;height:3px;background:#c4c4c4;z-index:3"></div>
<!-- pager -->
<div id="pg" class="abs sim">
 <div class="pb" style="left:0"></div><div class="pb" style="left:22px"></div>
 <div class="abs" style="left:44px;top:2px;width:60px;height:18px;border:1px solid #c0c0c0;background:#fff;text-align:right;padding-right:3px;line-height:19px">1</div>
 <div class="abs" style="left:113px;top:3.500px;line-height:18px;letter-spacing:.5px;word-spacing:3px">/ 477</div>
 <div class="pb" style="left:151px"></div><div class="pb" style="left:173px"></div>
 <div class="abs" style="left:202px;top:3.500px;line-height:18px">共47623条</div>
 <svg class="abs" style="left:0;top:2px" width="200" height="18" fill="none" stroke="#777" stroke-width="1"><path d="M6.5 3.5v11M15 3.5L8.5 9L15 14.5"/><path d="M37 3.5L30.5 9L37 14.5"/><path d="M158 3.5L164.5 9L158 14.5"/><path d="M179.500 3.5L186 9L179.500 14.5M188.500 3.500v11" stroke="#444"/></svg>
</div>
<!-- splitter dots -->
<svg class="abs" style="left:950px;top:753px" width="20" height="4"><path d="M0.500 2h19" stroke="#666" stroke-width="1.6" stroke-dasharray="2 2.200"/></svg>
<!-- bottom tabs -->
<div class="bt act" style="left:3px;width:79px">订单商品</div>
<div class="bt" style="left:82px;width:77px">支付详情</div>
<div class="bt" style="left:160px;width:77px">发票详情</div>


<!-- logo -->
<div class="abs lg" style="left:1692px;top:943px;font-size:21px;line-height:28px;transform:scaleX(1.35);transform-origin:0 0;-webkit-text-stroke:1px #2222f4;font-style:italic">KingBos</div>
<div class="abs lg" style="left:1808px;top:945px;font-size:5px;line-height:6px;font-weight:normal">®</div>
<div class="abs lg" style="left:1818px;top:940px;font-size:25.5px;line-height:36px;transform:scaleX(1.15) skewX(-12deg);transform-origin:0 100%;-webkit-text-stroke:.9px #2222f4">金博</div>
<div class="abs lg" style="left:1690.5px;top:976.5px;font-size:17.6px;line-height:22px;-webkit-text-stroke:.3px #2222f4">医药行业信息化管理专家</div>
<!-- status bar -->
<div id="sb" class="abs">
 <span style="left:8px">登录账套：名炫眼镜正式库</span><i style="left:161px"></i>
 <span style="left:172px">义乌市名炫眼镜有限公司(MXYJ)</span><i style="left:352px"></i>
 <span style="left:363px">账号名称：admin</span><i style="left:467px"></i>
 <span style="left:478px;letter-spacing:-.25px">本机机器名：LAPTOP-H2HHEFVS</span><i style="left:670px"></i>
 <span style="left:681px">未读邮件：(0)</span><i style="left:764px"></i>
 <span style="left:775px">网络状态：畅通</span><i style="left:867px"></i>
 <span style="left:878px">服务器时间：2019-12-06 21:38:53</span><i style="left:1076px"></i>
</div>
<div class="abs" style="left:0;top:1050px;width:1920px;height:8px;background:#17343a;overflow:hidden">
 <div class="abs" style="left:463px;top:0;width:36px;height:8px;background:#0f7c80"></div>
 <div class="abs" style="left:18px;top:6px;width:8px;height:2px;background:#dfe6e6"></div>
 <div class="abs" style="left:54px;top:6px;width:6px;height:2px;background:#dfe6e6;border-radius:3px 3px 0 0"></div>
 <div class="abs" style="left:88px;top:6px;width:6px;height:2px;background:#9aa"></div>
 <div class="abs" style="left:178px;top:6px;width:13px;height:2px;background:#dfe6e6"></div>
 <div class="abs" style="left:252px;top:6px;width:7px;height:2px;background:#9a9a9a"></div>
 <div class="abs" style="left:363px;top:6px;width:5px;height:2px;background:#e8d080"></div>
 <div class="abs" style="left:1468px;top:5px;width:15px;height:3px;background:#e8eeee"></div>
 <div class="abs" style="left:1501px;top:4px;width:2px;height:4px;background:#e8eeee"></div>
 <div class="abs" style="left:1506px;top:4px;width:2px;height:4px;background:#e8eeee"></div>
 <div class="abs" style="left:1513px;top:4px;width:41px;height:6px;background:#1f9e50;border:1px solid #fff"></div>
 <div class="abs" style="left:1915px;top:0;width:1px;height:8px;background:#7d8f8f"></div>
</div>
</body>
</html>
